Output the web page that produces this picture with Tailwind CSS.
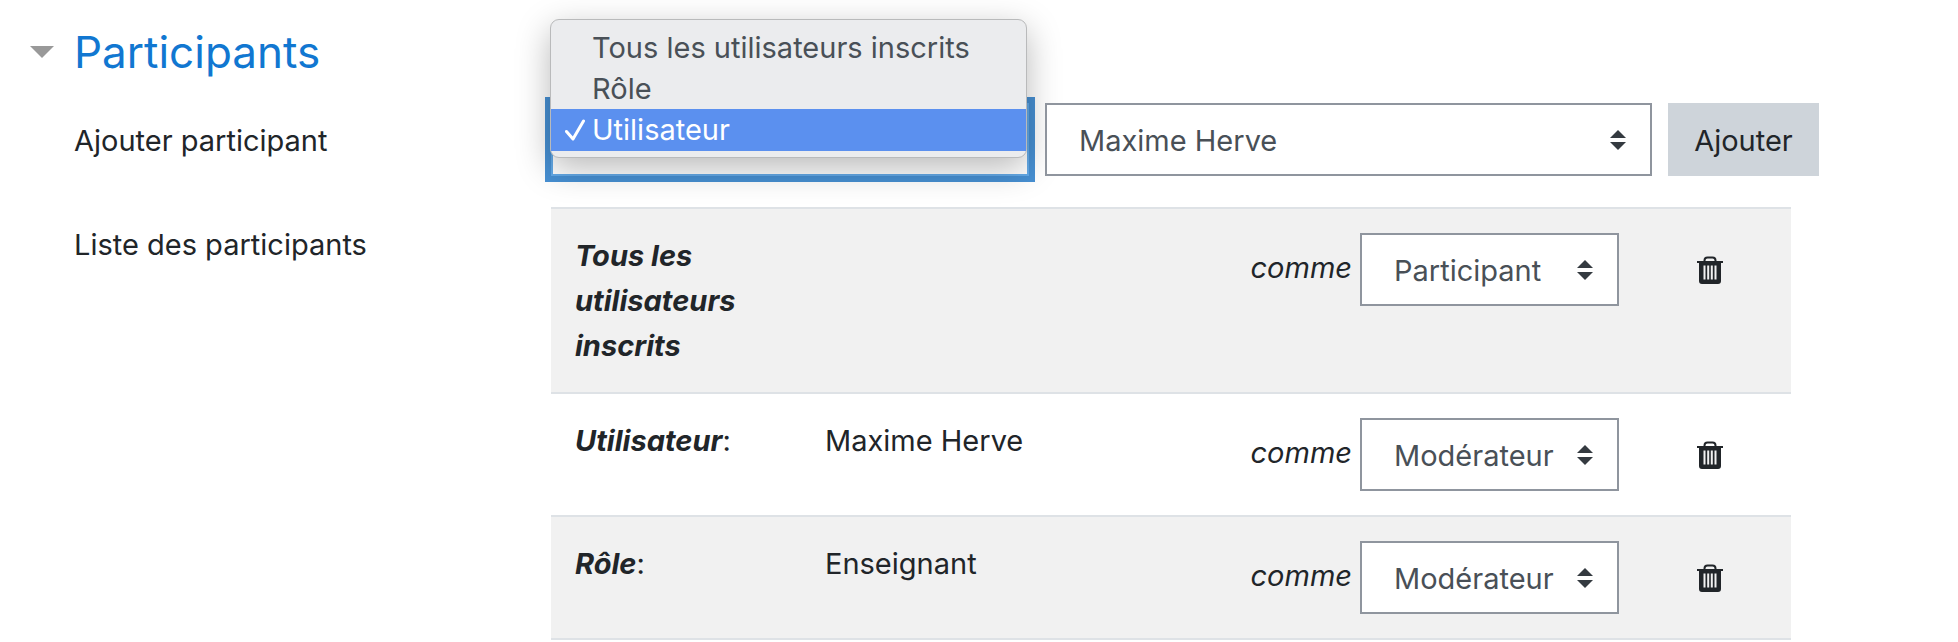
<!DOCTYPE html>
<html lang="fr">
<head>
    <meta charset="UTF-8">
    <meta name="viewport" content="width=device-width, initial-scale=1.0">
    <title>Participants</title>
    <script src="https://cdn.jsdelivr.net/npm/@tailwindcss/browser@4"></script>
</head>
<body class="bg-white font-['Inter',sans-serif] text-[29px] leading-[45px] text-[#212529]">
    <!-- Icons -->
    <svg class="hidden" aria-hidden="true">
        <symbol id="icon-sort" viewBox="0 0 16 20">
            <path d="M8 0l8 8H0zM0 12h16l-8 8z" fill="#343a40"/>
        </symbol>
        <symbol id="icon-trash" viewBox="0 0 26 28">
            <path d="M7.5 5.5V4.500a3 3 0 0 1 3-3h5a3 3 0 0 1 3 3v1" fill="none" stroke="#212529" stroke-width="2"/>
            <path d="M0 5h26v2h-2v18a3 3 0 0 1-3 3H5a3 3 0 0 1-3-3V7H0z" fill="#212529"/>
            <path d="M7.500 9.500v14M11.200 9.500v14M14.800 9.500v14M18.500 9.500v14" stroke="#f1f1f1" stroke-width="2"/>
        </symbol>
    </svg>

    <form class="pl-[30px] pt-4">
        <h3>
            <button type="button" aria-expanded="true" class="flex items-center gap-5 text-[44px] leading-[72px] text-[#1177d1]">
                <svg class="h-3 w-6" viewBox="0 0 24 12" aria-hidden="true"><path d="M0 0h24L12 12z" fill="#999"/></svg>
                Participants
            </button>
        </h3>

        <!-- Add participant -->
        <div class="mt-[15px] flex">
            <label for="addtype" class="w-[521px] shrink-0 pl-11 pt-[15px]">Ajouter participant</label>
            <div class="mr-[139px] flex flex-1 gap-4">
                <div class="relative w-[478px]">
                    <select id="addtype" class="block h-[73px] w-full appearance-none border-2 border-[#64aae8] bg-white px-[34px] text-transparent ring-6 ring-[#4790d3] outline-none">
                        <option>Tous les utilisateurs inscrits</option>
                        <option>Rôle</option>
                        <option selected>Utilisateur</option>
                    </select>
                    <ul role="listbox" aria-label="Ajouter participant" class="absolute -left-px bottom-[18px] w-[477px] rounded-[9px] border border-[#b9babb] bg-[#ebecee] pt-[7px] pb-[6px] leading-[41px] text-[#495057] shadow-[0_10px_34px_rgba(0,0,0,0.28)]">
                        <li role="option" aria-selected="false" class="pl-[41px]">Tous les utilisateurs inscrits</li>
                        <li role="option" aria-selected="false" class="pl-[41px]">Rôle</li>
                        <li role="option" aria-selected="true" class="flex items-center gap-[7px] bg-[#5b90ef] pl-[14px] leading-[42px] text-white">
                            <svg class="h-[22px] w-5" viewBox="0 0 20 22" aria-hidden="true"><path d="M1.500 12.500l6.500 7.500L18.500 2" fill="none" stroke="#fff" stroke-width="3" stroke-linecap="round" stroke-linejoin="round"/></svg>
                            Utilisateur
                        </li>
                    </ul>
                </div>
                <div class="relative flex-1">
                    <select aria-label="Utilisateur" class="block h-[73px] w-full appearance-none border-2 border-[#8f959e] bg-white pt-0.5 pl-8 text-[#495057]">
                        <option>Maxime Herve</option>
                    </select>
                    <svg class="pointer-events-none absolute top-[27px] right-[26px] h-5 w-4" aria-hidden="true"><use href="#icon-sort"/></svg>
                </div>
                <button type="button" class="h-[73px] w-[151px] bg-[#ced4da] pt-0.5">Ajouter</button>
            </div>
        </div>

        <!-- Participants list -->
        <div class="mt-[31px] flex">
            <div id="listlabel" class="w-[521px] shrink-0 pl-11 pt-[15px]">Liste des participants</div>
            <div class="mr-[167px] flex-1">
                <table aria-labelledby="listlabel" class="w-full table-fixed border-collapse border-b-2 border-[#dee2e6]">
                    <colgroup>
                        <col class="w-[250px]">
                        <col>
                        <col class="w-[420px]">
                        <col class="w-[172px]">
                    </colgroup>
                    <tbody class="align-top">
                        <tr class="border-t-2 border-[#dee2e6] bg-[#f1f1f1]">
                            <td class="p-6"><strong class="italic">Tous les utilisateurs inscrits</strong></td>
                            <td class="p-6"></td>
                            <td class="py-6">
                                <div class="flex justify-end gap-2">
                                    <label for="role1" class="pt-3 italic">comme</label>
                                    <div class="relative w-[259px]">
                                        <select id="role1" class="block h-[73px] w-full appearance-none border-2 border-[#8f959e] bg-white pt-0.5 pl-8 text-[#495057]">
                                            <option>Participant</option>
                                        </select>
                                        <svg class="pointer-events-none absolute top-[27px] right-[26px] h-5 w-4" aria-hidden="true"><use href="#icon-sort"/></svg>
                                    </div>
                                </div>
                            </td>
                            <td class="py-6 pl-[78px]">
                                <button type="button" aria-label="Supprimer" class="mt-[23px] block"><svg class="h-7 w-[26px]" aria-hidden="true"><use href="#icon-trash"/></svg></button>
                            </td>
                        </tr>
                        <tr class="border-t-2 border-[#dee2e6]">
                            <td class="p-6"><strong class="italic">Utilisateur</strong>:</td>
                            <td class="p-6">Maxime Herve</td>
                            <td class="py-6">
                                <div class="flex justify-end gap-2">
                                    <label for="role2" class="pt-3 italic">comme</label>
                                    <div class="relative w-[259px]">
                                        <select id="role2" class="block h-[73px] w-full appearance-none border-2 border-[#8f959e] bg-white pt-0.5 pl-8 text-[#495057]">
                                            <option>Modérateur</option>
                                        </select>
                                        <svg class="pointer-events-none absolute top-[27px] right-[26px] h-5 w-4" aria-hidden="true"><use href="#icon-sort"/></svg>
                                    </div>
                                </div>
                            </td>
                            <td class="py-6 pl-[78px]">
                                <button type="button" aria-label="Supprimer" class="mt-[23px] block"><svg class="h-7 w-[26px]" aria-hidden="true"><use href="#icon-trash"/></svg></button>
                            </td>
                        </tr>
                        <tr class="border-t-2 border-[#dee2e6] bg-[#f1f1f1]">
                            <td class="p-6"><strong class="italic">Rôle</strong>:</td>
                            <td class="p-6">Enseignant</td>
                            <td class="py-6">
                                <div class="flex justify-end gap-2">
                                    <label for="role3" class="pt-3 italic">comme</label>
                                    <div class="relative w-[259px]">
                                        <select id="role3" class="block h-[73px] w-full appearance-none border-2 border-[#8f959e] bg-white pt-0.5 pl-8 text-[#495057]">
                                            <option>Modérateur</option>
                                        </select>
                                        <svg class="pointer-events-none absolute top-[27px] right-[26px] h-5 w-4" aria-hidden="true"><use href="#icon-sort"/></svg>
                                    </div>
                                </div>
                            </td>
                            <td class="py-6 pl-[78px]">
                                <button type="button" aria-label="Supprimer" class="mt-[23px] block"><svg class="h-7 w-[26px]" aria-hidden="true"><use href="#icon-trash"/></svg></button>
                            </td>
                        </tr>
                    </tbody>
                </table>
            </div>
        </div>
    </form>
</body>
</html>
